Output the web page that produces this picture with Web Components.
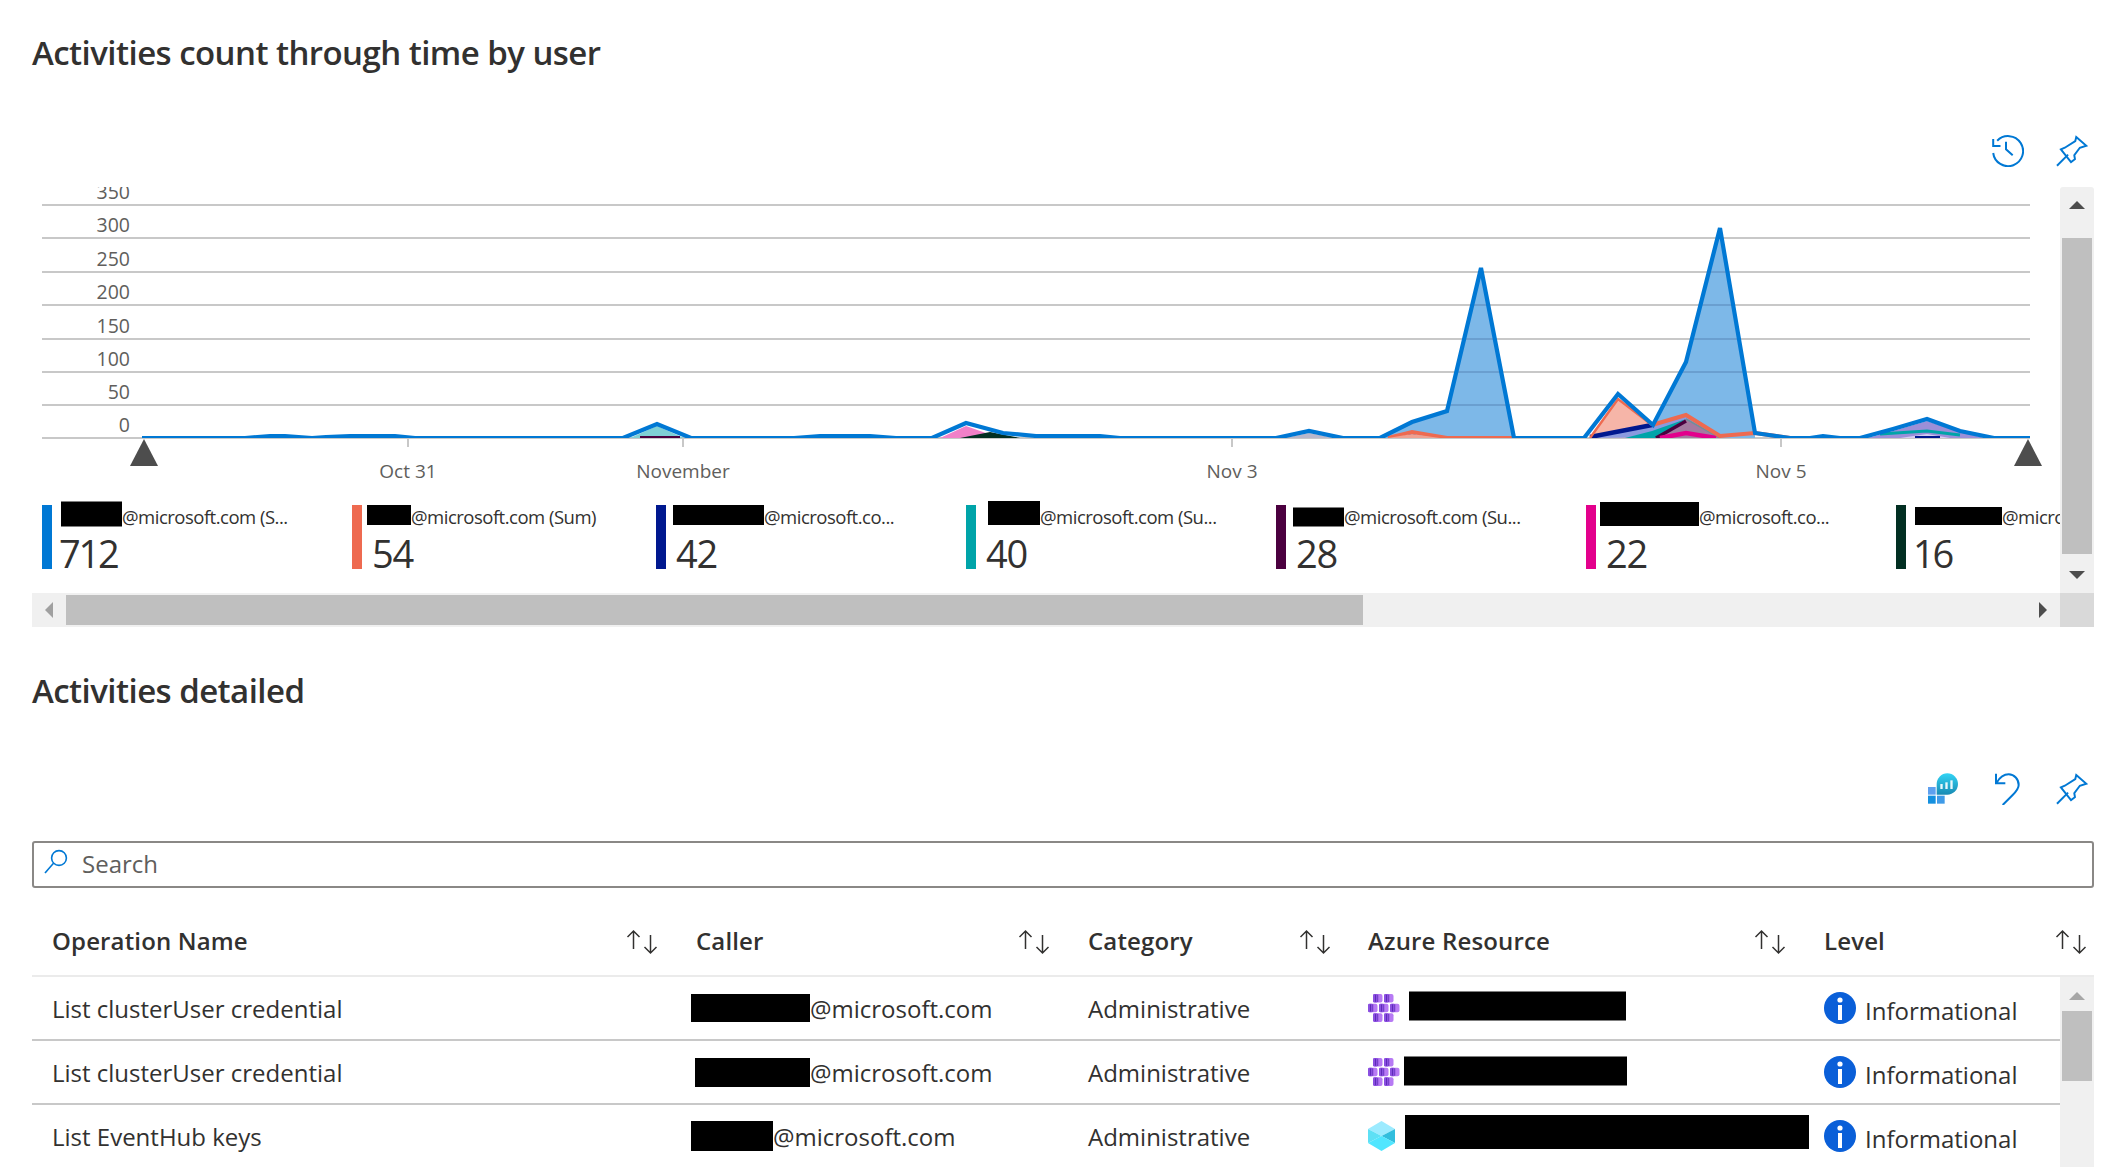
<!DOCTYPE html>
<html>
<head>
<meta charset="utf-8">
<title>Activities</title>
<style>
html,body{margin:0;height:1167px;overflow:hidden;background:#fff;}
body{font-family:"Open Sans","Liberation Sans",sans-serif;color:#333;}
</style>
</head>
<body>
<activity-page>
  <section-title>Activities count through time by user</section-title>
  <tool-bar gap="32" top="60">
    <az-icon name="history"></az-icon>
    <az-icon name="pin"></az-icon>
  </tool-bar>
  <chart-panel>
    <activity-chart slot="chart"></activity-chart>
    <legend-item slot="legend" color="#0078d4" value="712" tight width="310"><black-box w="61" h="25" dx="0" dy="-2.5"></black-box>@microsoft.com (S...</legend-item>
    <legend-item slot="legend" color="#ee6a50" value="54" width="304"><black-box w="44" h="20" dx="-4" dy="-1"></black-box>@microsoft.com (Sum)</legend-item>
    <legend-item slot="legend" color="#00188f" value="42" width="310"><black-box w="91" h="20" dx="-2" dy="-1"></black-box>@microsoft.co...</legend-item>
    <legend-item slot="legend" color="#00a4a9" value="40" width="310"><black-box w="52" h="24" dx="3" dy="-3"></black-box>@microsoft.com (Su...</legend-item>
    <legend-item slot="legend" color="#4b003f" value="28" width="310"><black-box w="51" h="19" dx="-2" dy="0.5"></black-box>@microsoft.com (Su...</legend-item>
    <legend-item slot="legend" color="#e3008c" value="22" width="310"><black-box w="99" h="24" dx="-5" dy="-2"></black-box>@microsoft.co...</legend-item>
    <legend-item slot="legend" color="#022f22" value="16" tight width="200"><black-box w="87" h="18" dx="0" dy="0"></black-box>@micro</legend-item>
  </chart-panel>
  <section-title top="42">Activities detailed</section-title>
  <tool-bar gap="32" top="60">
    <az-icon name="insights"></az-icon>
    <az-icon name="undo"></az-icon>
    <az-icon name="pin"></az-icon>
  </tool-bar>
  <search-box placeholder="Search"></search-box>
  <activity-table>
    <table-row>
      <span slot="op">List clusterUser credential</span>
      <span slot="caller"><black-box w="119" h="28"></black-box>@microsoft.com</span>
      <span slot="category">Administrative</span>
      <span slot="resource"><az-icon name="cluster"></az-icon><black-box w="217" h="29" dx="9" dy="-2.5"></black-box></span>
      <span slot="level"><az-icon name="info"></az-icon><level-text>Informational</level-text></span>
    </table-row>
    <table-row>
      <span slot="op">List clusterUser credential</span>
      <span slot="caller"><black-box w="115" h="29" dx="4"></black-box>@microsoft.com</span>
      <span slot="category">Administrative</span>
      <span slot="resource"><az-icon name="cluster"></az-icon><black-box w="223" h="29" dx="4" dy="-1.5"></black-box></span>
      <span slot="level"><az-icon name="info"></az-icon><level-text>Informational</level-text></span>
    </table-row>
    <table-row>
      <span slot="op">List EventHub keys</span>
      <span slot="caller"><black-box w="82" h="30"></black-box>@microsoft.com</span>
      <span slot="category">Administrative</span>
      <span slot="resource"><az-icon name="cube"></az-icon><black-box w="404" h="34" dx="10" dy="-4"></black-box></span>
      <span slot="level"><az-icon name="info"></az-icon><level-text>Informational</level-text></span>
    </table-row>
  </activity-table>
</activity-page>

<script>
const ICONS = {
  history: [32, 32, `<svg width="32" height="32" viewBox="0 0 32 32" fill="none" stroke="#0078d4" stroke-width="2"><path d="M5.2 5.8A15 15 0 1 1 1.2 18"/><path d="M1.2 4V11H8.5"/><path d="M14 6.7V14.3L20.7 20.3"/></svg>`],
  pin: [32, 32, `<svg width="32" height="32" viewBox="468 75 98 96" fill="none" stroke="#0078d4" stroke-width="6"><path d="M530 80L561 107L541 113L524 136L526 148L514 157L483 118L495 113L527 93Z"/><path d="M471 168L505 134"/></svg>`],
  undo: [32, 32, `<svg width="32" height="32" viewBox="338 66 96 96" fill="none" stroke="#0078d4" stroke-width="6"><path d="M350 68V97H378"/><path d="M352 95C362 78 375 70 388 70C405 70 418 85 418 102C418 113 412 120 400 132L370 162"/></svg>`],
  insights: [32, 32, `<svg width="32" height="32" viewBox="147 70 96 96"><defs><linearGradient id="g" x1="0" y1="0" x2="0" y2="1"><stop offset="0" stop-color="#32d4f5"/><stop offset="1" stop-color="#198ab3"/></linearGradient></defs><rect x="147" y="112" width="23" height="23" fill="#5ea0ef"/><rect x="147" y="138" width="23" height="24" fill="#1490df"/><rect x="174" y="138" width="23" height="24" fill="#3f9be8"/><path d="M205 71A32 32 0 0 1 205 135H173V103A32 32 0 0 1 205 71Z" fill="url(#g)"/><rect x="184" y="103" width="7" height="15" fill="#e8f8fc"/><rect x="199" y="98" width="7" height="20" fill="#e8f8fc"/><rect x="214" y="92" width="7" height="26" fill="#e8f8fc"/></svg>`],
  cluster: [32, 28, `<svg width="32" height="28" viewBox="0 0 32 28">${[[5,0],[16,0],[0,9.7],[11,9.7],[22,9.7],[5,19.3],[16,19.3]].map(([x,y]) => `<rect x="${x}" y="${y}" width="9.5" height="8.6" rx="2" fill="#b77af4"/><rect x="${x}" y="${y}" width="4.6" height="8.6" rx="1.4" fill="#8a4fe0"/><rect x="${x+2}" y="${y+.8}" width="1" height="7" fill="#5f2bb8"/><rect x="${x+4.4}" y="${y+.6}" width=".8" height="7.4" fill="#5f2bb8"/>`).join("")}</svg>`],
  cube: [27, 30, `<svg width="27" height="30" viewBox="0 0 27 30"><path d="M13.5 0L27 8L13.5 15L0 8Z" fill="#9cebff"/><path d="M27 8V22L13.5 15Z" fill="#32bedd"/><path d="M0 8V22L13.5 15Z" fill="#5ee0f5"/><path d="M0 22L13.5 15L27 22L13.5 30Z" fill="#50e6ff"/></svg>`],
  info: [32, 32, `<svg width="32" height="32" viewBox="0 0 32 32"><circle cx="16" cy="16" r="16" fill="#0a5fd8"/><circle cx="16" cy="8" r="2.6" fill="#fff"/><rect x="14" y="13" width="4" height="15" fill="#fff"/></svg>`],
};

class AzIcon extends HTMLElement {
  constructor() {
    super();
    this.attachShadow({mode: "open"});
    const [w, h, svg] = ICONS[this.getAttribute("name")];
    this.shadowRoot.innerHTML = `<style>:host{display:block;width:${w}px;height:${h}px;flex:none;line-height:0;}</style>${svg}`;
  }
}
customElements.define("az-icon", AzIcon);

class BlackBox extends HTMLElement {
  constructor() {
    super();
    this.attachShadow({mode: "open"});
    const w = this.getAttribute("w"), h = this.getAttribute("h");
    const dx = this.getAttribute("dx") || 0, dy = this.getAttribute("dy") || 0;
    this.shadowRoot.innerHTML = `<style>:host{display:block;flex:none;width:${w}px;height:${h}px;background:#000;margin-left:${dx}px;transform:translateY(${dy}px);}</style>`;
  }
}
customElements.define("black-box", BlackBox);

class SectionTitle extends HTMLElement {
  constructor() {
    super();
    this.attachShadow({mode: "open"});
    const top = this.getAttribute("top") || 31;
    this.shadowRoot.innerHTML = `<style>:host{display:block;padding-top:${top}px;font-size:33px;font-weight:600;line-height:44px;color:#323130;letter-spacing:-.55px;}</style><slot></slot>`;
  }
}
customElements.define("section-title", SectionTitle);

class ToolBar extends HTMLElement {
  constructor() {
    super();
    this.attachShadow({mode: "open"});
    this.shadowRoot.innerHTML = `<style>:host{display:flex;justify-content:flex-end;gap:${this.getAttribute("gap")}px;margin-top:${this.getAttribute("top")}px;padding-right:6px;height:32px;}</style><slot></slot>`;
  }
}
customElements.define("tool-bar", ToolBar);

const arrow = (dir, fill) => {
  const pts = {up: "0,8 8,0 16,8", down: "0,0 16,0 8,8", left: "8,0 8,16 0,8", right: "0,0 8,8 0,16"}[dir];
  const vert = dir === "up" || dir === "down";
  return `<svg width="${vert ? 16 : 8}" height="${vert ? 8 : 16}"><polygon points="${pts}" fill="${fill}"/></svg>`;
};

class ScrollBar extends HTMLElement {
  constructor() {
    super();
    this.attachShadow({mode: "open"});
    const vert = this.getAttribute("orient") === "v";
    const start = this.getAttribute("start"), thumb = this.getAttribute("thumb");
    const startPad = this.getAttribute("pad") || 13, endPad = this.getAttribute("endpad") || 13;
    const startFill = this.getAttribute("startfill") || "#4d4d4d";
    const showEnd = this.getAttribute("noend") === null;
    this.shadowRoot.innerHTML = `
    <style>
    :host{display:flex;background:#f0f0f0;overflow:hidden;line-height:0;flex-direction:${vert ? "column" : "row"};${vert ? "width:34px;border-radius:3px 3px 0 0;" : "height:34px;"}}
    .start{flex:none;display:flex;${vert ? `height:${start}px;justify-content:center;padding-top:${startPad}px;box-sizing:border-box;` : `width:${start}px;align-items:center;padding-left:${startPad}px;box-sizing:border-box;`}}
    .thumb{flex:none;background:#bfbfbf;${vert ? `height:${thumb}px;margin:0 2px;` : `width:${thumb}px;margin:2px 0;`}}
    .end{flex:1;display:flex;${vert ? `justify-content:center;padding-top:${endPad}px;` : `justify-content:flex-end;align-items:center;padding-right:${endPad}px;`}}
    </style>
    <div class="start">${arrow(vert ? "up" : "left", startFill)}</div>
    <div class="thumb"></div>
    <div class="end">${showEnd ? arrow(vert ? "down" : "right", "#4d4d4d") : ""}</div>`;
  }
}
customElements.define("scroll-bar", ScrollBar);

const chartTemplate = document.createElement("template");
chartTemplate.innerHTML = `
<style>
:host{display:block;height:297px;line-height:0;}
text{font-family:"Open Sans","Liberation Sans",sans-serif;font-size:19px;fill:#605e5c;}
.ylabel{font-size:19.5px;}
.grid{stroke:#c8c8c8;stroke-width:2;}
</style>
<svg id="svg" width="2028" height="297" viewBox="32 187 2028 297"></svg>`;

class ActivityChart extends HTMLElement {
  constructor() {
    super();
    this.attachShadow({mode: "open"});
    this.shadowRoot.appendChild(chartTemplate.content.cloneNode(true));
    const lines = [[350,205],[300,238],[250,272],[200,305],[150,339],[100,372],[50,405],[0,438]];
    const peak1 = "M1380 438L1412 422L1447 411L1481 268L1514 438Z";
    const peak2 = "M1653 425L1686 362L1720 228L1755 433L1755 438H1653Z";
    const line = (pts, color, sw) =>
      `<path d="M${pts.map(p => p.join(" ")).join("L")}" fill="none" stroke="${color}" stroke-width="${sw}"/>`;

    let s = `<defs>
      <clipPath id="p1"><path d="${peak1}"/></clipPath>
      <clipPath id="p2"><path d="${peak2}"/></clipPath>
      <clipPath id="plot"><rect x="130" y="187" width="1902" height="251"/></clipPath>
    </defs>`;
    for (const [v, y] of lines) {
      s += `<line class="grid" x1="42" x2="2030" y1="${y}" y2="${y}"/>`;
      s += `<text class="ylabel" x="130" y="${y - 6}" text-anchor="end">${v}</text>`;
    }
    for (const [label, x] of [["Oct 31",408],["November",683],["Nov 3",1232],["Nov 5",1781]]) {
      s += `<line x1="${x}" x2="${x}" y1="439" y2="447" stroke="#c8c8c8" stroke-width="2"/>`;
      s += `<text x="${x}" y="478" text-anchor="middle">${label}</text>`;
    }

    s += `<g clip-path="url(#plot)">`;
    // big peaks, the gridlines show through the fill
    s += `<path d="${peak1}" fill="#7db8e8"/><path d="${peak2}" fill="#7db8e8"/>`;
    for (const [v, y] of lines.slice(1, 7)) {
      s += `<line x1="1380" x2="1514" y1="${y}" y2="${y}" stroke="#6a9fd0" stroke-width="2" clip-path="url(#p1)"/>`;
      s += `<line x1="1653" x2="1755" y1="${y}" y2="${y}" stroke="#6a9fd0" stroke-width="2" clip-path="url(#p2)"/>`;
    }

    // cluster of small series under the second peak
    s += `<path d="M1590 438L1618 398L1652 425L1652 438Z" fill="#f6b5a8"/>`;
    s += `<path d="M1592 438L1652 425L1686 416L1722 437Z" fill="#8a9adf"/>`;
    s += `<path d="M1653 438L1686 419L1720 438Z" fill="#a47aa0"/>`;
    s += `<path d="M1625 438L1652 431L1686 419L1656 438Z" fill="#00a4a9"/>`;
    s += line([[1656,438],[1686,421]], "#4b003f", 3.5);
    s += line([[1686,419],[1720,438]], "#6f8f9a", 1.5);
    s += line([[1660,438],[1686,433],[1716,438]], "#e3008c", 4.5);
    s += line([[1590,437],[1652,425]], "#00188f", 4.5);
    s += line([[1590,438],[1618,399],[1652,425]], "#ee6a50", 2.5);
    s += line([[1652,425],[1686,415],[1720,436],[1755,433],[1790,438]], "#ee6a50", 4);
    s += line([[1388,438],[1412,432],[1447,438],[1514,438]], "#ee6a50", 4);
    s += line([[1400,438],[1412,435],[1425,438]], "#4b003f", 2);

    // small bumps with their own fills
    s += `<path d="M630 438L657 426L684 438Z" fill="#7fd0d5"/>`;
    s += `<path d="M640 437H680" stroke="#4b003f" stroke-width="2"/>`;
    s += `<path d="M940 438L966 426L1000 438Z" fill="#f080c8"/>`;
    s += `<path d="M960 438L990 432L1020 438Z" fill="#022f22"/>`;
    s += `<path d="M1285 438L1309 433L1335 438Z" fill="#b8b8cc"/>`;
    s += `<path d="M1388 438L1412 434L1440 438Z" fill="#f0a090"/>`;
    s += `<path d="M1868 438L1893 431L1927 421L1960 432L1985 438Z" fill="#9b8fd8"/>`;
    s += `<path d="M1880 434L1927 431L1960 435" stroke="#00a4a9" stroke-width="3" fill="none"/>`;
    s += `<path d="M1900 438L1927 434L1950 438Z" fill="#d6cdf2"/>`;
    s += `<path d="M1915 437H1940" stroke="#00188f" stroke-width="2"/>`;

    // total series on top, the flat parts sit half under the axis
    const blue = [[142,438],[245,438],[270,436],[285,436],[312,438],[326,437],[350,436],[395,436],[415,438],[623,438],[657,424],[691,438],[794,438],[820,436],[870,436],[896,438],[932,438],[966,423],[1003,433],[1036,436],[1100,436],[1120,438],[1276,438],[1309,431],[1343,438],[1380,438],[1412,422],[1447,411],[1481,268],[1514,438],[1584,438],[1618,394],[1653,425],[1686,362],[1720,228],[1755,433],[1790,438],[1810,438],[1823,436],[1840,438],[1860,438],[1893,429],[1927,419],[1960,431],[1994,438],[2030,438]];
    s += line(blue, "#0078d4", 4.2);
    s += `</g>`;
    s += `<polygon points="144,439 158,466 130,466" fill="#4d4d4d"/>`;
    s += `<polygon points="2028,439 2042,466 2014,466" fill="#4d4d4d"/>`;
    this.shadowRoot.getElementById("svg").innerHTML = s;
  }
}
customElements.define("activity-chart", ActivityChart);

class LegendItem extends HTMLElement {
  constructor() {
    super();
    this.attachShadow({mode: "open"});
    const tight = this.hasAttribute("tight");
    this.shadowRoot.innerHTML = `
    <style>
    :host{display:flex;flex:none;width:${this.getAttribute("width")}px;height:64px;gap:9px;}
    .bar{width:10px;background:${this.getAttribute("color")};flex:none;}
    .col{display:flex;flex-direction:column;min-width:0;}
    .name{display:flex;align-items:center;height:22px;font-size:18.5px;letter-spacing:-.5px;color:#323130;white-space:nowrap;}
    .value{font-size:38px;line-height:40px;margin-top:6px;margin-left:${tight ? -2 : 1}px;color:#323130;letter-spacing:${tight ? -2.2 : -1.2}px;}
    </style>
    <div class="bar"></div>
    <div class="col"><div class="name"><slot></slot></div><div class="value">${this.getAttribute("value")}</div></div>`;
  }
}
customElements.define("legend-item", LegendItem);

const panelTemplate = document.createElement("template");
panelTemplate.innerHTML = `
<style>
:host{display:grid;grid-template-columns:2028px 34px;grid-template-rows:406px 34px;margin-top:20px;}
.pane{display:flex;flex-direction:column;overflow:hidden;}
.legend{display:flex;padding:21px 0 0 10px;overflow:hidden;}
.corner{background:#d9d9d9;}
</style>
<div class="pane">
  <slot name="chart"></slot>
  <div class="legend"><slot name="legend"></slot></div>
</div>
<scroll-bar orient="v" start="51" thumb="316" pad="14" endpad="17"></scroll-bar>
<scroll-bar start="34" thumb="1297" startfill="#a0a0a0"></scroll-bar>
<div class="corner"></div>`;

class ChartPanel extends HTMLElement {
  constructor() {
    super();
    this.attachShadow({mode: "open"});
    this.shadowRoot.appendChild(panelTemplate.content.cloneNode(true));
  }
}
customElements.define("chart-panel", ChartPanel);

class SearchBox extends HTMLElement {
  constructor() {
    super();
    this.attachShadow({mode: "open"});
    this.shadowRoot.innerHTML = `
    <style>
    :host{display:flex;align-items:center;gap:13px;height:47px;box-sizing:border-box;margin-top:36px;border:2px solid #8a8886;border-radius:3px;padding-left:10px;font-size:24px;color:#605e5c;}
    svg{flex:none;margin-top:-6px;}
    span{margin-top:-2px;}
    </style>
    <svg width="25" height="25" viewBox="0 0 25 25" fill="none" stroke="#0078d4" stroke-width="1.6"><circle cx="15" cy="9" r="7.4"/><path d="M9.5 14.2L1 24"/></svg>
    <span>${this.getAttribute("placeholder")}</span>`;
  }
}
customElements.define("search-box", SearchBox);

const SORT_ICON = `<svg width="34" height="26" viewBox="0 0 34 26" fill="none" stroke="#323130" stroke-width="1.5"><path d="M8.5 2V20M2.5 8L8.5 2L14.5 8"/><path d="M25.5 6V24M19.5 18L25.5 24L31.5 18"/></svg>`;

class TableHead extends HTMLElement {
  constructor() {
    super();
    this.attachShadow({mode: "open"});
    const cols = [["Operation Name",20,32],["Caller",5,37],["Category",0,36],["Azure Resource",0,37],["Level",0,6]];
    this.shadowRoot.innerHTML = `
    <style>
    :host{display:grid;grid-template-columns:659px 397px 280px 456px 270px;height:89px;box-sizing:border-box;border-bottom:2px solid #ebebeb;font-size:24px;font-weight:600;letter-spacing:.15px;color:#323130;}
    div{display:flex;justify-content:space-between;align-items:flex-start;padding-top:38px;box-sizing:border-box;line-height:30px;}
    svg{margin-top:3px;}
    </style>
    ${cols.map(([t, l, r]) => `<div style="padding-left:${l}px;padding-right:${r}px"><span>${t}</span>${SORT_ICON}</div>`).join("")}`;
  }
}
customElements.define("table-head", TableHead);

const rowTemplate = document.createElement("template");
rowTemplate.innerHTML = `
<style>
:host{display:grid;grid-template-columns:659px 397px 280px 456px 236px;height:64px;box-sizing:border-box;border-bottom:2px solid #c8c8c8;font-size:24px;color:#323130;flex:none;}
div{display:flex;align-items:center;min-width:0;white-space:nowrap;}
.op{padding-left:20px;}
::slotted(span){display:flex;align-items:center;}
</style>
<div class="op"><slot name="op"></slot></div>
<div><slot name="caller"></slot></div>
<div><slot name="category"></slot></div>
<div><slot name="resource"></slot></div>
<div><slot name="level"></slot></div>`;

class TableRow extends HTMLElement {
  constructor() {
    super();
    this.attachShadow({mode: "open"});
    this.shadowRoot.appendChild(rowTemplate.content.cloneNode(true));
  }
}
customElements.define("table-row", TableRow);

class LevelText extends HTMLElement {
  constructor() {
    super();
    this.attachShadow({mode: "open"});
    this.shadowRoot.innerHTML = `<style>:host{display:block;padding:5px 0 0 9px;}</style><slot></slot>`;
  }
}
customElements.define("level-text", LevelText);

class ActivityTable extends HTMLElement {
  constructor() {
    super();
    this.attachShadow({mode: "open"});
    this.shadowRoot.innerHTML = `
    <style>
    :host{display:block;}
    .body{display:flex;height:190px;overflow:hidden;}
    .rows{width:2028px;display:flex;flex-direction:column;}
    scroll-bar{border-radius:0;}
    </style>
    <table-head></table-head>
    <div class="body">
      <div class="rows"><slot></slot></div>
      <scroll-bar orient="v" start="34" thumb="70" pad="15" startfill="#a6a6a6" noend></scroll-bar>
    </div>`;
  }
}
customElements.define("activity-table", ActivityTable);

class ActivityPage extends HTMLElement {
  constructor() {
    super();
    this.attachShadow({mode: "open"});
    this.shadowRoot.innerHTML = `<style>:host{display:block;height:1167px;box-sizing:border-box;padding:0 14px 0 32px;overflow:hidden;}</style><slot></slot>`;
  }
}
customElements.define("activity-page", ActivityPage);
</script>
</body>
</html>
